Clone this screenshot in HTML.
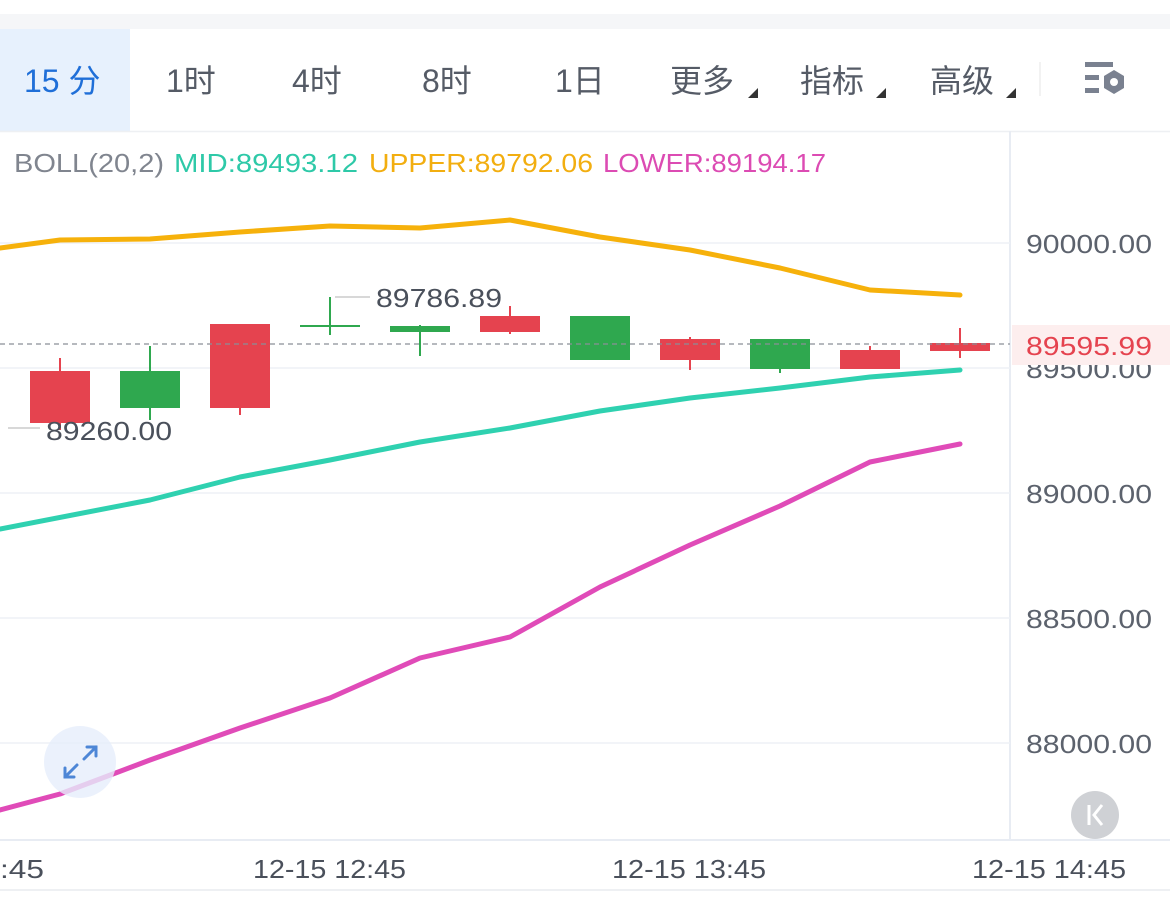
<!DOCTYPE html>
<html><head><meta charset="utf-8"><style>
body{margin:0;width:1170px;height:893px;overflow:hidden;background:#fff;font-family:"Liberation Sans","Noto Sans CJK SC",sans-serif}
</style></head><body>
<svg width="1170" height="893" viewBox="0 0 1170 893" xmlns="http://www.w3.org/2000/svg" font-family="Liberation Sans, Noto Sans CJK SC, sans-serif">
<rect x="0" y="14" width="1170" height="15" fill="#f5f6f8"/>
<rect x="0" y="29" width="130" height="102" fill="#e7f1fd"/>
<line x1="0" y1="131.5" x2="1170" y2="131.5" stroke="#eef0f3" stroke-width="1.5"/>
<g font-size="32" fill="#555b66">
<text x="24" y="92" fill="#1f6fd8">15 分</text>
<text x="166" y="92">1时</text>
<text x="292" y="92">4时</text>
<text x="422" y="92">8时</text>
<text x="555" y="92">1日</text>
<text x="670" y="92">更多</text>
<text x="800" y="92">指标</text>
<text x="930" y="92">高级</text>
</g>
<g fill="#333">
<polygon points="748,98 758,98 758,88"/>
<polygon points="876,98 886,98 886,88"/>
<polygon points="1006,98 1016,98 1016,88"/>
</g>
<line x1="1040" y1="62" x2="1040" y2="96" stroke="#eee" stroke-width="1.5"/>
<g fill="#7a8190">
<rect x="1085" y="62" width="28" height="5"/>
<rect x="1085" y="75" width="14" height="5"/>
<rect x="1085" y="88" width="14" height="5"/>
<polygon points="1114,70 1124,76 1124,88 1114,94 1104,88 1104,76"/>
</g>
<circle cx="1114" cy="82" r="4" fill="#fff"/>
<g font-size="26">
<text x="14" y="172" fill="#80858f" textLength="150" lengthAdjust="spacingAndGlyphs">BOLL(20,2)</text>
<text x="174" y="172" fill="#2ec9a8" textLength="184" lengthAdjust="spacingAndGlyphs">MID:89493.12</text>
<text x="369" y="172" fill="#f2ae10" textLength="224" lengthAdjust="spacingAndGlyphs">UPPER:89792.06</text>
<text x="603" y="172" fill="#dc4bb3" textLength="223" lengthAdjust="spacingAndGlyphs">LOWER:89194.17</text>
</g>
<line x1="1010" y1="131" x2="1010" y2="840" stroke="#e8ecf3" stroke-width="2"/>
<g stroke="#eef1f6" stroke-width="1.5">
<line x1="0" y1="243" x2="1010" y2="243"/><line x1="0" y1="368" x2="1010" y2="368"/>
<line x1="0" y1="493" x2="1010" y2="493"/><line x1="0" y1="618" x2="1010" y2="618"/>
<line x1="0" y1="743" x2="1010" y2="743"/>
</g>
<g font-size="26" fill="#5c626d">
<text x="1026" y="253" textLength="126" lengthAdjust="spacingAndGlyphs">90000.00</text><text x="1026" y="378" textLength="126" lengthAdjust="spacingAndGlyphs">89500.00</text>
<text x="1026" y="503" textLength="126" lengthAdjust="spacingAndGlyphs">89000.00</text><text x="1026" y="628" textLength="126" lengthAdjust="spacingAndGlyphs">88500.00</text>
<text x="1026" y="753" textLength="126" lengthAdjust="spacingAndGlyphs">88000.00</text>
</g>
<line x1="0" y1="840" x2="1170" y2="840" stroke="#e8ecf3" stroke-width="2"/>
<line x1="0" y1="890" x2="1170" y2="890" stroke="#eef0f3" stroke-width="2"/>
<g font-size="26" fill="#4a505b">
<text x="0" y="878" textLength="44" lengthAdjust="spacingAndGlyphs">:45</text>
<text x="253" y="878" textLength="153" lengthAdjust="spacingAndGlyphs">12-15 12:45</text>
<text x="612" y="878" textLength="154" lengthAdjust="spacingAndGlyphs">12-15 13:45</text>
<text x="972" y="878" textLength="154" lengthAdjust="spacingAndGlyphs">12-15 14:45</text>
</g>
<g stroke-width="2">
<g fill="#e5434f" stroke="#e5434f">
<line x1="60" y1="358" x2="60" y2="430"/><rect x="30" y="371" width="60" height="52" stroke="none"/>
<line x1="240" y1="324" x2="240" y2="415"/><rect x="210" y="324" width="60" height="84" stroke="none"/>
<line x1="510" y1="306" x2="510" y2="334"/><rect x="480" y="316" width="60" height="16" stroke="none"/>
<line x1="690" y1="337" x2="690" y2="370"/><rect x="660" y="339" width="60" height="21" stroke="none"/>
<line x1="870" y1="346" x2="870" y2="369"/><rect x="840" y="350" width="60" height="19" stroke="none"/>
<line x1="960" y1="328" x2="960" y2="358"/><rect x="930" y="343" width="60" height="8" stroke="none"/>
</g>
<g fill="#2fa84f" stroke="#2fa84f">
<line x1="150" y1="346" x2="150" y2="420"/><rect x="120" y="371" width="60" height="37" stroke="none"/>
<line x1="330" y1="297" x2="330" y2="335"/><rect x="300" y="325" width="60" height="2" stroke="none"/>
<line x1="420" y1="325" x2="420" y2="356"/><rect x="390" y="326" width="60" height="6" stroke="none"/>
<rect x="570" y="316" width="60" height="44" stroke="none"/>
<line x1="780" y1="339" x2="780" y2="373"/><rect x="750" y="339" width="60" height="30" stroke="none"/>
</g>
</g>
<line x1="0" y1="344" x2="1010" y2="344" stroke="#8a8f98" stroke-width="1.2" stroke-dasharray="5,4"/>
<rect x="1012" y="325" width="158" height="40" fill="#fdeeee"/>
<text x="1026" y="355" font-size="26" fill="#e5434f" textLength="126" lengthAdjust="spacingAndGlyphs">89595.99</text>
<g fill="none" stroke-width="5" stroke-linejoin="round" stroke-linecap="round">
<polyline stroke="#f6b10b" points="0,248 60,240 150,239 240,232 330,226 420,228 510,220 600,237 690,250 780,268 870,290 960,295"/>
<polyline stroke="#2fd1b0" points="0,529 150,500 240,477 330,460 420,442 510,428 600,411 690,398 780,388 870,377 960,370"/>
<polyline stroke="#e04bb8" points="0,810 60,794 150,760 240,728 330,698 420,658 510,637 600,587 690,545 780,506 870,462 960,444"/>
</g>
<line x1="335" y1="297" x2="370" y2="297" stroke="#ccc" stroke-width="1.5"/>
<text x="376" y="307" font-size="26" fill="#4a505b" textLength="126" lengthAdjust="spacingAndGlyphs">89786.89</text>
<line x1="8" y1="428" x2="40" y2="428" stroke="#ccc" stroke-width="1.5"/>
<text x="46" y="440" font-size="26" fill="#4a505b" textLength="126" lengthAdjust="spacingAndGlyphs">89260.00</text>
<circle cx="80" cy="762" r="36" fill="#e6eefb" fill-opacity="0.8"/>
<g stroke="#4d86d6" stroke-width="3" fill="none" stroke-linecap="round">
<polyline points="87,747 96,747 96,756"/><line x1="96" y1="747" x2="84" y2="759"/>
<polyline points="65,768 65,777 74,777"/><line x1="65" y1="777" x2="77" y2="765"/>
</g>
<circle cx="1095" cy="815" r="24" fill="#cfd1d5"/>
<line x1="1089" y1="805" x2="1089" y2="825" stroke="#fff" stroke-width="3"/>
<polyline points="1102,805 1094,815 1102,825" stroke="#fff" stroke-width="3" fill="none"/>
</svg>
</body></html>
